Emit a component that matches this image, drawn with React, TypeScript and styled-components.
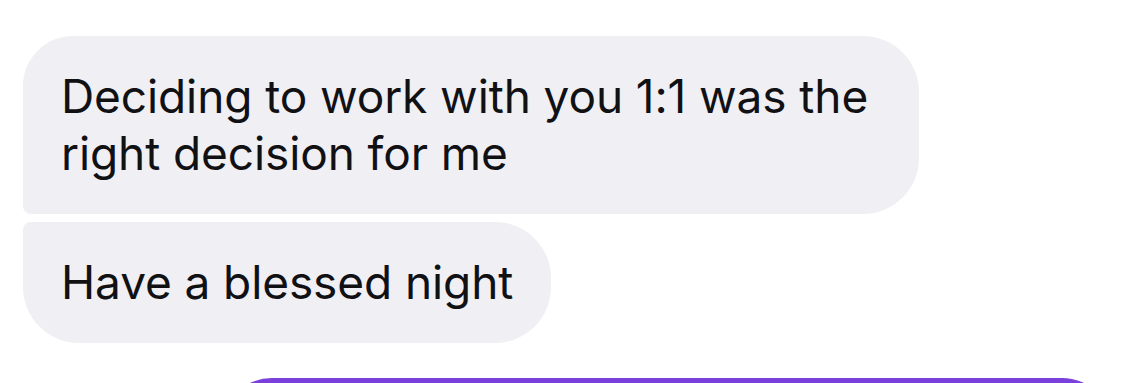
import React from "react";
import styled, { createGlobalStyle } from "styled-components";

const Global = createGlobalStyle`
  html, body {
    margin: 0;
    padding: 0;
    background: #ffffff;
    overflow: hidden;
  }
  body {
    font-family: Inter, "Noto Sans", "Liberation Sans", sans-serif;
  }
`;

const Thread = styled.div`
  display: flex;
  flex-direction: column;
  align-items: flex-start;
  padding: 36px 23px 0 23px;
  height: 383px;
  box-sizing: border-box;
  overflow: hidden;
`;

const Bubble = styled.div<{ $first?: boolean; $last?: boolean }>`
  flex-shrink: 0;
  box-sizing: border-box;
  max-width: 896px;
  padding: 32px 38px;
  background: #efeff4;
  color: #111114;
  font-size: 46px;
  line-height: 57px;
  letter-spacing: -0.1px;
  border-radius: ${(p) => (p.$first ? "50px" : "8px")} 56px 56px
    ${(p) => (p.$last ? "56px" : "8px")};
  & + & {
    margin-top: 8px;
  }
`;

const Sent = styled.div`
  flex-shrink: 0;
  align-self: flex-end;
  box-sizing: border-box;
  width: 890px;
  height: 120px;
  margin-top: 35px;
  margin-right: 10px;
  background: #7b3fdc;
  border-radius: 50px;
`;

export default function App() {
  return (
    <>
      <Global />
      <Thread>
        <Bubble $first>Deciding to work with you 1:1 was the right decision for me</Bubble>
        <Bubble $last>Have a blessed night</Bubble>
        <Sent />
      </Thread>
    </>
  );
}
